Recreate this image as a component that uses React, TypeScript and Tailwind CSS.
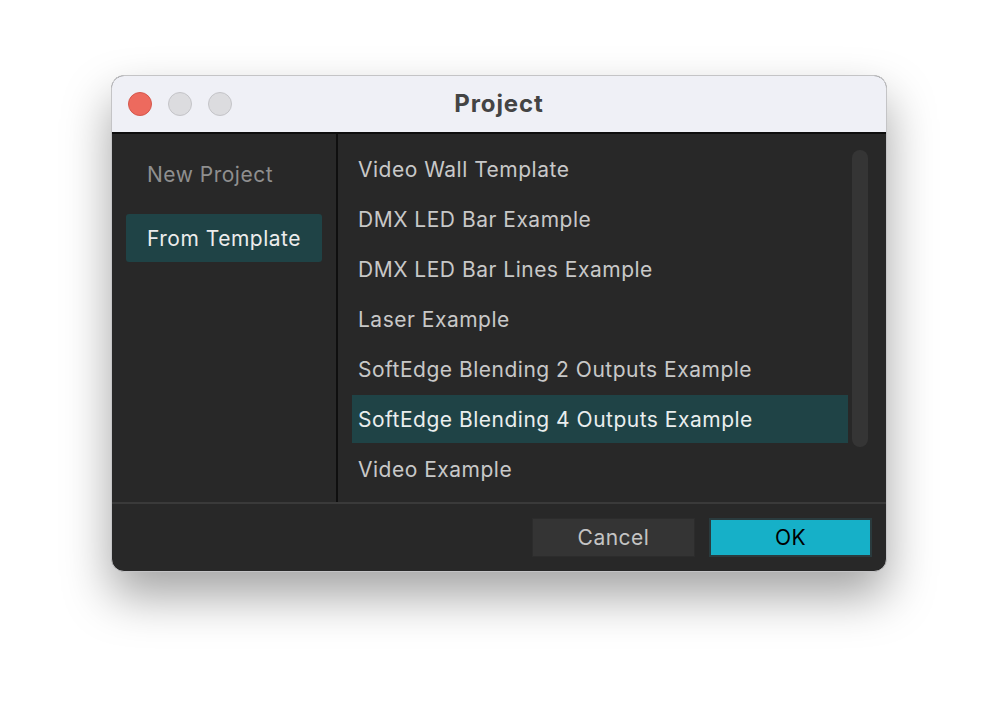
const SIDEBAR = ['New Project', 'From Template'];

const TEMPLATES = [
  'Video Wall Template',
  'DMX LED Bar Example',
  'DMX LED Bar Lines Example',
  'Laser Example',
  'SoftEdge Blending 2 Outputs Example',
  'SoftEdge Blending 4 Outputs Example',
  'Video Example',
];

export default function App() {
  const activeSection = 'From Template';
  const activeTemplate = 'SoftEdge Blending 4 Outputs Example';

  return (
    <div
      className="w-[998px] h-[720px] bg-white pt-[75px] pl-[111px]"
      style={{ fontFamily: 'Inter, "Noto Sans", sans-serif' }}
    >
      <div className="w-[776px] h-[497px] rounded-[13px] border border-[#c4c4c6] overflow-hidden flex flex-col bg-[#282828] shadow-[0_24px_48px_rgba(0,0,0,0.36)]">
        {/* title bar */}
        <div className="h-[58px] shrink-0 bg-[#eff0f6] border-b-2 border-[#0e0e0e] grid grid-cols-[1fr_auto_1fr] items-center">
          <div className="flex items-center gap-4 pl-4">
            <span className="w-6 h-6 rounded-full bg-[#ed6a5e] border border-[#d5574c]" />
            <span className="w-6 h-6 rounded-full bg-[#dcdcdf] border border-[#c4c4c8]" />
            <span className="w-6 h-6 rounded-full bg-[#dcdcdf] border border-[#c4c4c8]" />
          </div>
          <div className="text-[24px] font-bold text-[#444444] tracking-[0.9px]">Project</div>
          <div />
        </div>

        {/* content */}
        <div className="flex h-[368px] shrink-0 text-[21px] tracking-[0.5px]">
          <div className="w-[224px] shrink-0 flex flex-col gap-4 pt-4 px-[14px]">
            {SIDEBAR.map(item => (
              <div
                key={item}
                className={`h-12 flex items-center pt-px pl-[21px] rounded-[3px] ${
                  item === activeSection ? 'bg-[#1f4346] text-[#ececec]' : 'text-[#8f8f8f]'
                }`}
              >
                {item}
              </div>
            ))}
          </div>
          <div className="w-[2px] bg-[#0f0f0f] shrink-0" />
          <div className="flex-1 flex items-start pt-[11px] pl-[14px]">
            <div className="w-[496px] flex flex-col gap-[2px]">
              {TEMPLATES.map(name => (
                <div
                  key={name}
                  className={`h-12 flex items-center pt-px px-[6px] ${
                    name === activeTemplate ? 'bg-[#1f4346] text-[#eaeeee]' : 'text-[#c8c8c8]'
                  }`}
                >
                  {name}
                </div>
              ))}
            </div>
            {/* scrollbar */}
            <div className="ml-1 mt-[5px] w-4 h-[297px] rounded-full bg-[#353535]" />
          </div>
        </div>

        {/* footer */}
        <div className="flex-1 border-t-2 border-[#3a3a3a] flex justify-end items-start gap-[14px] pt-[14px] pr-[14px] text-[21px] tracking-[0.5px]">
          <button className="w-[163px] h-[39px] shrink-0 bg-[#343434] border border-[#2c2c2c] text-[#c4c4c4]">
            Cancel
          </button>
          <button className="w-[163px] h-[39px] shrink-0 bg-[#16b0c8] border-2 border-[#2a3b3e] text-black">
            OK
          </button>
        </div>
      </div>
    </div>
  );
}
